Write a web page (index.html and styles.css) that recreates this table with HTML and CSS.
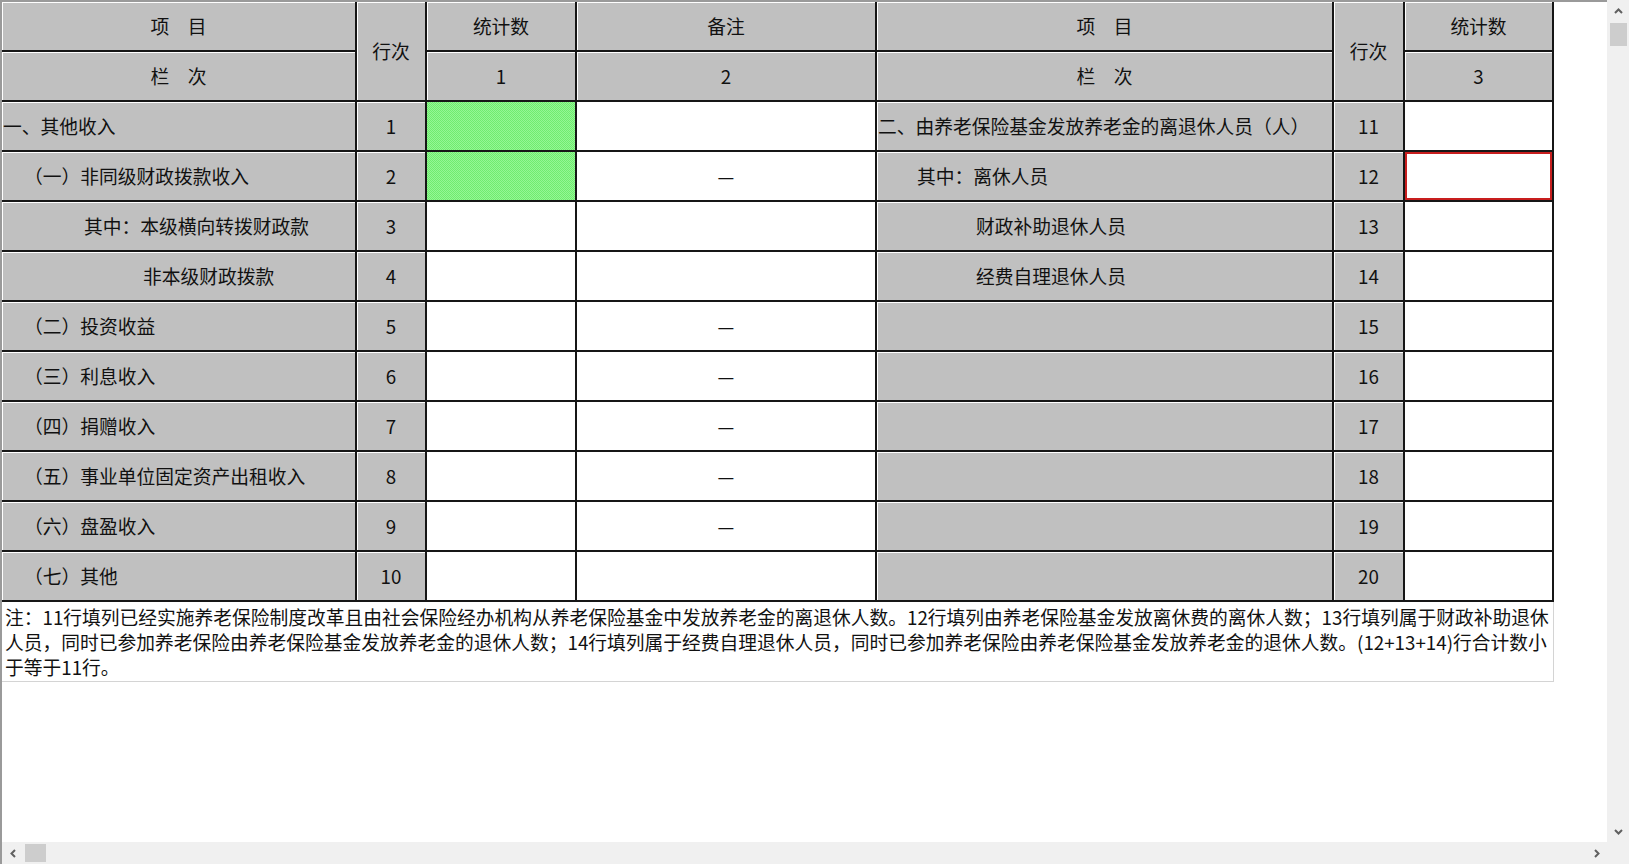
FILE: index.html
```html
<!DOCTYPE html>
<html lang="zh-CN">
<head>
<meta charset="utf-8">
<title>报表</title>
<link rel="stylesheet" href="styles.css">
</head>
<body>
<div class="window">
  <div class="main">
    <div class="viewport">
      <div class="report">
        <div class="cell g c">项　目</div>
        <div class="cell g c span2">行次</div>
        <div class="cell g c">统计数</div>
        <div class="cell g c">备注</div>
        <div class="cell g c">项　目</div>
        <div class="cell g c span2">行次</div>
        <div class="cell g c">统计数</div>

        <div class="cell g c">栏　次</div>
        <div class="cell g c">1</div>
        <div class="cell g c">2</div>
        <div class="cell g c">栏　次</div>
        <div class="cell g c">3</div>

        <div class="cell g i0">一、其他收入</div>
        <div class="cell g c">1</div>
        <div class="cell green"></div>
        <div class="cell w"></div>
        <div class="cell g i0">二、由养老保险基金发放养老金的离退休人员（人）</div>
        <div class="cell g c">11</div>
        <div class="cell w"></div>

        <div class="cell g i1">（一）非同级财政拨款收入</div>
        <div class="cell g c">2</div>
        <div class="cell green"></div>
        <div class="cell w c">—</div>
        <div class="cell g r2">其中：离休人员</div>
        <div class="cell g c">12</div>
        <div class="cell w active"></div>

        <div class="cell g i3">其中：本级横向转拨财政款</div>
        <div class="cell g c">3</div>
        <div class="cell w"></div>
        <div class="cell w"></div>
        <div class="cell g r5">财政补助退休人员</div>
        <div class="cell g c">13</div>
        <div class="cell w"></div>

        <div class="cell g i4">非本级财政拨款</div>
        <div class="cell g c">4</div>
        <div class="cell w"></div>
        <div class="cell w"></div>
        <div class="cell g r5">经费自理退休人员</div>
        <div class="cell g c">14</div>
        <div class="cell w"></div>

        <div class="cell g i1">（二）投资收益</div>
        <div class="cell g c">5</div>
        <div class="cell w"></div>
        <div class="cell w c">—</div>
        <div class="cell g"></div>
        <div class="cell g c">15</div>
        <div class="cell w"></div>

        <div class="cell g i1">（三）利息收入</div>
        <div class="cell g c">6</div>
        <div class="cell w"></div>
        <div class="cell w c">—</div>
        <div class="cell g"></div>
        <div class="cell g c">16</div>
        <div class="cell w"></div>

        <div class="cell g i1">（四）捐赠收入</div>
        <div class="cell g c">7</div>
        <div class="cell w"></div>
        <div class="cell w c">—</div>
        <div class="cell g"></div>
        <div class="cell g c">17</div>
        <div class="cell w"></div>

        <div class="cell g i1">（五）事业单位固定资产出租收入</div>
        <div class="cell g c">8</div>
        <div class="cell w"></div>
        <div class="cell w c">—</div>
        <div class="cell g"></div>
        <div class="cell g c">18</div>
        <div class="cell w"></div>

        <div class="cell g i1">（六）盘盈收入</div>
        <div class="cell g c">9</div>
        <div class="cell w"></div>
        <div class="cell w c">—</div>
        <div class="cell g"></div>
        <div class="cell g c">19</div>
        <div class="cell w"></div>

        <div class="cell g i1">（七）其他</div>
        <div class="cell g c">10</div>
        <div class="cell w"></div>
        <div class="cell w"></div>
        <div class="cell g"></div>
        <div class="cell g c">20</div>
        <div class="cell w"></div>
      </div>
      <div class="note">注：11行填列已经实施养老保险制度改革且由社会保险经办机构从养老保险基金中发放养老金的离退休人数。12行填列由养老保险基金发放离休费的离休人数；13行填列属于财政补助退休<br>人员，同时已参加养老保险由养老保险基金发放养老金的退休人数；14行填列属于经费自理退休人员，同时已参加养老保险由养老保险基金发放养老金的退休人数。(12+13+14)行合计数小<br>于等于11行。</div>
    </div>
    <div class="hscroll">
      <div class="sbtn"><svg width="9" height="9" viewBox="0 0 9 9"><polyline points="6,1 2.5,4.5 6,8" fill="none" stroke="#606060" stroke-width="2"/></svg></div>
      <div class="hthumb"></div>
      <div class="hspace"></div>
      <div class="sbtn"><svg width="9" height="9" viewBox="0 0 9 9"><polyline points="3,1 6.5,4.5 3,8" fill="none" stroke="#606060" stroke-width="2"/></svg></div>
    </div>
  </div>
  <div class="side">
    <div class="vscroll">
      <div class="sbtn"><svg width="9" height="9" viewBox="0 0 9 9"><polyline points="1,6 4.5,2.5 8,6" fill="none" stroke="#606060" stroke-width="2"/></svg></div>
      <div class="vthumb"></div>
      <div class="vspace"></div>
      <div class="sbtn"><svg width="9" height="9" viewBox="0 0 9 9"><polyline points="1,3 4.5,6.5 8,3" fill="none" stroke="#606060" stroke-width="2"/></svg></div>
    </div>
    <div class="corner"></div>
  </div>
</div>
</body>
</html>
```
FILE: styles.css
```css
html, body {
  margin: 0;
  padding: 0;
  overflow: hidden;
  background: #fff;
}
body {
  font-family: "Noto Sans CJK SC", "Noto Sans", sans-serif;
  font-size: 18.75px;
  color: #111;
}
.window {
  display: flex;
  width: 1629px;
  height: 864px;
}
.main {
  width: 1607px;
  display: flex;
  flex-direction: column;
  border-left: 2px solid #9a9a9a;
  box-sizing: border-box;
}
.viewport {
  flex: 1;
  border-top: 2px solid #9a9a9a;
  background: #fff;
  overflow: hidden;
  min-height: 0;
}
.report {
  display: grid;
  grid-template-columns: 355px 70px 150px 300px 457px 71px 149px;
  grid-auto-rows: 50px;
  width: 1552px;
}
.cell {
  box-sizing: border-box;
  border-right: 2px solid #161616;
  border-bottom: 2px solid #161616;
  display: flex;
  align-items: center;
  white-space: nowrap;
  overflow: hidden;
  line-height: 1;
}
.g {
  background: #c0c0c0;
  box-shadow: inset 1px 1px 0 #ffffff;
}
.w {
  background: #ffffff;
}
.green {
  background-color: #7ff27f;
  background-image: repeating-conic-gradient(#6fec6f 0 25%, #94f794 0 50%);
  background-size: 2px 2px;
}
.active {
  box-shadow: inset 0 0 0 2px #c81e1e;
}
.c { justify-content: center; }
.span2 { grid-row: span 2; }
.i0 { padding-left: 1px; }
.i1 { padding-left: 22px; }
.i3 { padding-left: 82px; }
.i4 { padding-left: 141px; }
.r2 { padding-left: 40px; }
.r5 { padding-left: 99px; }

.note {
  box-sizing: border-box;
  width: 1552px;
  height: 80px;
  padding: 2px 0 0 3px;
  line-height: 25px;
  white-space: nowrap;
  border-right: 1px solid #d4d4d4;
  border-bottom: 1px solid #d4d4d4;
}

.hscroll {
  height: 22px;
  background: #f0f0f0;
  display: flex;
  align-items: center;
}
.sbtn {
  width: 22px;
  height: 22px;
  display: flex;
  align-items: center;
  justify-content: center;
  flex: none;
}
.hthumb {
  width: 21px;
  height: 18px;
  margin-left: 1px;
  background: #cdcdcd;
}
.hspace { flex: 1; }
.side {
  width: 22px;
  display: flex;
  flex-direction: column;
}
.vscroll {
  flex: 1;
  background: #f0f0f0;
  display: flex;
  flex-direction: column;
  align-items: center;
}
.vthumb {
  width: 17px;
  height: 23px;
  margin-top: 1px;
  background: #cdcdcd;
}
.vspace { flex: 1; }
.corner {
  height: 22px;
  background: #f0f0f0;
}
```
